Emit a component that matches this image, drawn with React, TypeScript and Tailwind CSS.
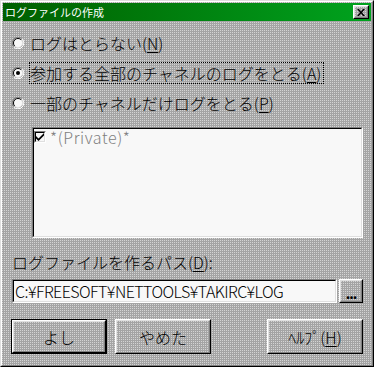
import React from "react";

const jp = "font-['Noto_Sans_CJK_JP',sans-serif]";
// dithered win95-ish gray face
const dither =
  "bg-[#a4a4a4] bg-[conic-gradient(at_1px_1px,#a4a4a4_75%,#d4d4d4_0)] bg-[length:2px_2px]";

const Raised = ({
  children,
  className = "",
  isDefault = false,
}: {
  children?: React.ReactNode;
  className?: string;
  isDefault?: boolean;
}) => {
  const inner = (
    <div className="h-full w-full border border-t-white border-l-white border-r-black border-b-black">
      <div
        className={`h-full w-full border border-t-[#dfdfdf] border-l-[#dfdfdf] border-r-[#808080] border-b-[#808080] flex items-center justify-center ${dither}`}
      >
        {children}
      </div>
    </div>
  );
  if (isDefault) {
    return <div className={`border border-black ${className}`}>{inner}</div>;
  }
  return <div className={className}>{inner}</div>;
};

const Sunken = ({
  children,
  className = "",
}: {
  children?: React.ReactNode;
  className?: string;
}) => (
  <div
    className={`border border-t-[#808080] border-l-[#808080] border-r-white border-b-white ${className}`}
  >
    <div className="h-full w-full border border-t-black border-l-black border-r-[#dfdfdf] border-b-[#dfdfdf] bg-[#f8f8f8]">
      {children}
    </div>
  </div>
);

const Radio = ({ checked }: { checked?: boolean }) => (
  <svg width="12" height="12" viewBox="0 0 12 12" className="shrink-0">
    <circle cx="6" cy="6" r="4.5" fill="#f8f8f8" />
    <path d="M10.24 1.76 A6 6 0 0 0 1.76 10.24" stroke="#808080" fill="none" />
    <path d="M1.76 10.24 A6 6 0 0 0 10.24 1.76" stroke="#ffffff" fill="none" />
    <path d="M9.2 2.8 A4.5 4.5 0 0 0 2.8 9.2" stroke="#000000" fill="none" />
    <path d="M2.8 9.2 A4.5 4.5 0 0 0 9.2 2.8" stroke="#dfdfdf" fill="none" />
    {checked && <circle cx="6" cy="6" r="2" fill="#000" />}
  </svg>
);

const U = ({ children }: { children: React.ReactNode }) => (
  <span className="underline underline-offset-2">{children}</span>
);

export default function App() {
  return (
    <div className={`w-[374px] h-[367px] ${jp} font-light`}>
      <div className="h-full border border-t-[#dfdfdf] border-l-[#dfdfdf] border-r-black border-b-black">
        <div
          className={`h-full border border-t-white border-l-white border-r-[#808080] border-b-[#808080] p-px flex flex-col ${dither}`}
        >
          {/* title bar */}
          <div className="h-[18px] flex items-center bg-gradient-to-r from-[#005f00] to-[#00a31e] pl-[2px] pr-[2px]">
            <span className="text-white text-[11px] leading-[18px] font-normal">
              ログファイルの作成
            </span>
            <Raised className="ml-auto w-[16px] h-[14px]">
              <svg width="8" height="7" viewBox="0 0 8 7">
                <path d="M0 0h2l2 2.5L6 0h2L5 3.5 8 7H6L4 4.5 2 7H0l3-3.5z" fill="#000" />
              </svg>
            </Raised>
          </div>

          {/* body */}
          <div className="flex-1 flex flex-col pl-[9px] pr-[8px] pt-[7px] text-[16px] leading-[20px] text-black">
            <div className="h-[30px] flex items-center">
              <Radio />
              <span className="ml-[5px] border border-transparent pr-[2px]">
                ログはとらない(<U>N</U>)
              </span>
            </div>
            <div className="h-[30px] flex items-center">
              <Radio checked />
              <span className="ml-[5px] border border-dotted border-black pr-[2px]">
                参加する全部のチャネルのログをとる(<U>A</U>)
              </span>
            </div>
            <div className="h-[30px] flex items-center">
              <Radio />
              <span className="ml-[5px] border border-transparent pr-[2px]">
                一部のチャネルだけログをとる(<U>P</U>)
              </span>
            </div>

            <Sunken className="mt-[9px] ml-[20px] h-[111px] shrink-0">
              <div className="flex items-center mt-px h-[14px]">
                <div className="w-[12px] h-[12px] border border-t-[#808080] border-l-[#808080] border-r-white border-b-white">
                  <div className="w-full h-full border border-t-black border-l-black border-r-[#dfdfdf] border-b-[#dfdfdf] bg-[#f8f8f8] flex items-center justify-center">
                    <svg width="8" height="8" viewBox="0 0 8 8">
                      <path d="M0 3v2.5L2.5 8 8 2.5V0L2.5 5.5z" fill="#000" />
                    </svg>
                  </div>
                </div>
                <span className="ml-[4px] text-[#808080] leading-[14px] tracking-[0.6px]">
                  *(Private)*
                </span>
              </div>
            </Sunken>

            <div className="mt-[14px]">
              ログファイルを作るパス(<U>D</U>):
            </div>

            <div className="mt-[7px] h-[24px] flex">
              <Sunken className="flex-1">
                <div className="pl-[1px] leading-[20px] tracking-[-0.55px]">
                  C:¥FREESOFT¥NETTOOLS¥TAKIRC¥LOG
                </div>
              </Sunken>
              <Raised className="ml-[2px] w-[24px]">
                <span className="font-bold text-[14px] leading-none mt-[4px] tracking-[-1px]">...</span>
              </Raised>
            </div>

            <div className="mt-[16px] h-[35px] flex">
              <Raised isDefault className="-ml-px w-[96px]">
                よし
              </Raised>
              <Raised className="ml-[8px] w-[96px]">やめた</Raised>
              <Raised className="ml-auto w-[96px]">
                ﾍﾙﾌﾟ(<U>H</U>)
              </Raised>
            </div>
          </div>
        </div>
      </div>
    </div>
  );
}
